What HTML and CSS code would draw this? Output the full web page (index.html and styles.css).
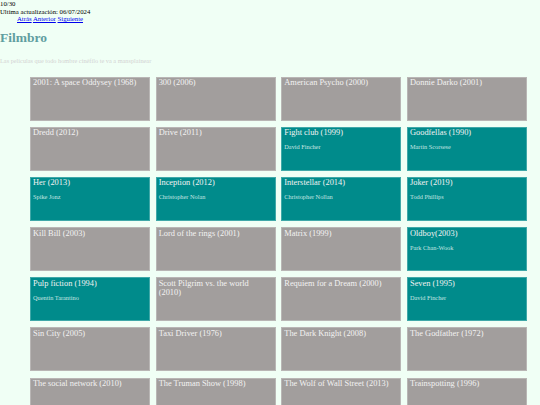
FILE: index.html
```html
<!DOCTYPE html>
<html lang="es">
<head>
<meta charset="utf-8">
<title>Filmbro</title>
<link rel="stylesheet" href="styles.css">
</head>
<body>
<div class="meta">10/30</div>
<div class="meta">Ultima actualización: 06/07/2024</div>
<nav class="nav"><a href="#">Atrás</a> <a href="#">Anterior</a> <a href="#">Siguiente</a></nav>
<h1 class="brand">Filmbro</h1>
<p class="tagline">Las películas que todo hombre cinéfilo te va a mansplainear</p>
<main class="grid">
  <div class="card"><div class="title">2001: A space Oddysey (1968)</div></div>
  <div class="card"><div class="title">300 (2006)</div></div>
  <div class="card"><div class="title">American Psycho (2000)</div></div>
  <div class="card"><div class="title">Donnie Darko (2001)</div></div>
  <div class="card"><div class="title">Dredd (2012)</div></div>
  <div class="card"><div class="title">Drive (2011)</div></div>
  <div class="card seen"><div class="title">Fight club (1999)</div><div class="director">David Fincher</div></div>
  <div class="card seen"><div class="title">Goodfellas (1990)</div><div class="director">Martin Scorsese</div></div>
  <div class="card seen"><div class="title">Her (2013)</div><div class="director">Spike Jonz</div></div>
  <div class="card seen"><div class="title">Inception (2012)</div><div class="director">Christopher Nolan</div></div>
  <div class="card seen"><div class="title">Interstellar (2014)</div><div class="director">Christopher Nollan</div></div>
  <div class="card seen"><div class="title">Joker (2019)</div><div class="director">Todd Phillips</div></div>
  <div class="card"><div class="title">Kill Bill (2003)</div></div>
  <div class="card"><div class="title">Lord of the rings (2001)</div></div>
  <div class="card"><div class="title">Matrix (1999)</div></div>
  <div class="card seen"><div class="title">Oldboy(2003)</div><div class="director">Park Chan-Wook</div></div>
  <div class="card seen"><div class="title">Pulp fiction (1994)</div><div class="director">Quentin Tarantino</div></div>
  <div class="card"><div class="title">Scott Pilgrim vs. the world (2010)</div></div>
  <div class="card"><div class="title">Requiem for a Dream (2000)</div></div>
  <div class="card seen"><div class="title">Seven (1995)</div><div class="director">David Fincher</div></div>
  <div class="card"><div class="title">Sin City (2005)</div></div>
  <div class="card"><div class="title">Taxi Driver (1976)</div></div>
  <div class="card"><div class="title">The Dark Knight (2008)</div></div>
  <div class="card"><div class="title">The Godfather (1972)</div></div>
  <div class="card"><div class="title">The social network (2010)</div></div>
  <div class="card"><div class="title">The Truman Show (1998)</div></div>
  <div class="card"><div class="title">The Wolf of Wall Street (2013)</div></div>
  <div class="card"><div class="title">Trainspotting (1996)</div></div>
</main>
</body>
</html>
```

FILE: styles.css
```css
html, body {
  margin: 0;
  padding: 0;
}
body {
  background: #f0fff5;
  font-family: "Liberation Serif", "Times New Roman", serif;
  font-size: 6.75px;
  color: #000;
  overflow: hidden;
}
.meta {
  line-height: 7.7px;
}
.nav {
  padding-left: 17px;
  line-height: 7.7px;
}
.nav a {
  color: #0000ee;
}
.brand {
  margin: 7.3px 0 0 0;
  font-size: 13.5px;
  line-height: 15.5px;
  font-weight: bold;
  color: #5f9ea0;
}
.tagline {
  margin: 11px 0 0 0;
  font-size: 6.3px;
  line-height: 7.2px;
  color: #d3d3d3;
}
.grid {
  margin: 12.5px 0 0 30px;
  display: grid;
  grid-template-columns: repeat(4, 120px);
  column-gap: 5.67px;
  row-gap: 6.17px;
}
.card {
  box-sizing: border-box;
  height: 44px;
  background: #a29e9d;
  border: 1px solid rgba(255, 255, 255, 0.25);
  padding: 0 4px 0 2px;
  color: #f2f2f2;
}
.card.seen {
  background: #008b8b;
}
.title {
  font-size: 8.4px;
  line-height: 9.6px;
  margin-top: 0.5px;
}
.director {
  margin-top: 5.4px;
  font-size: 6.3px;
  line-height: 7.2px;
  color: #c6e6e2;
}
```
